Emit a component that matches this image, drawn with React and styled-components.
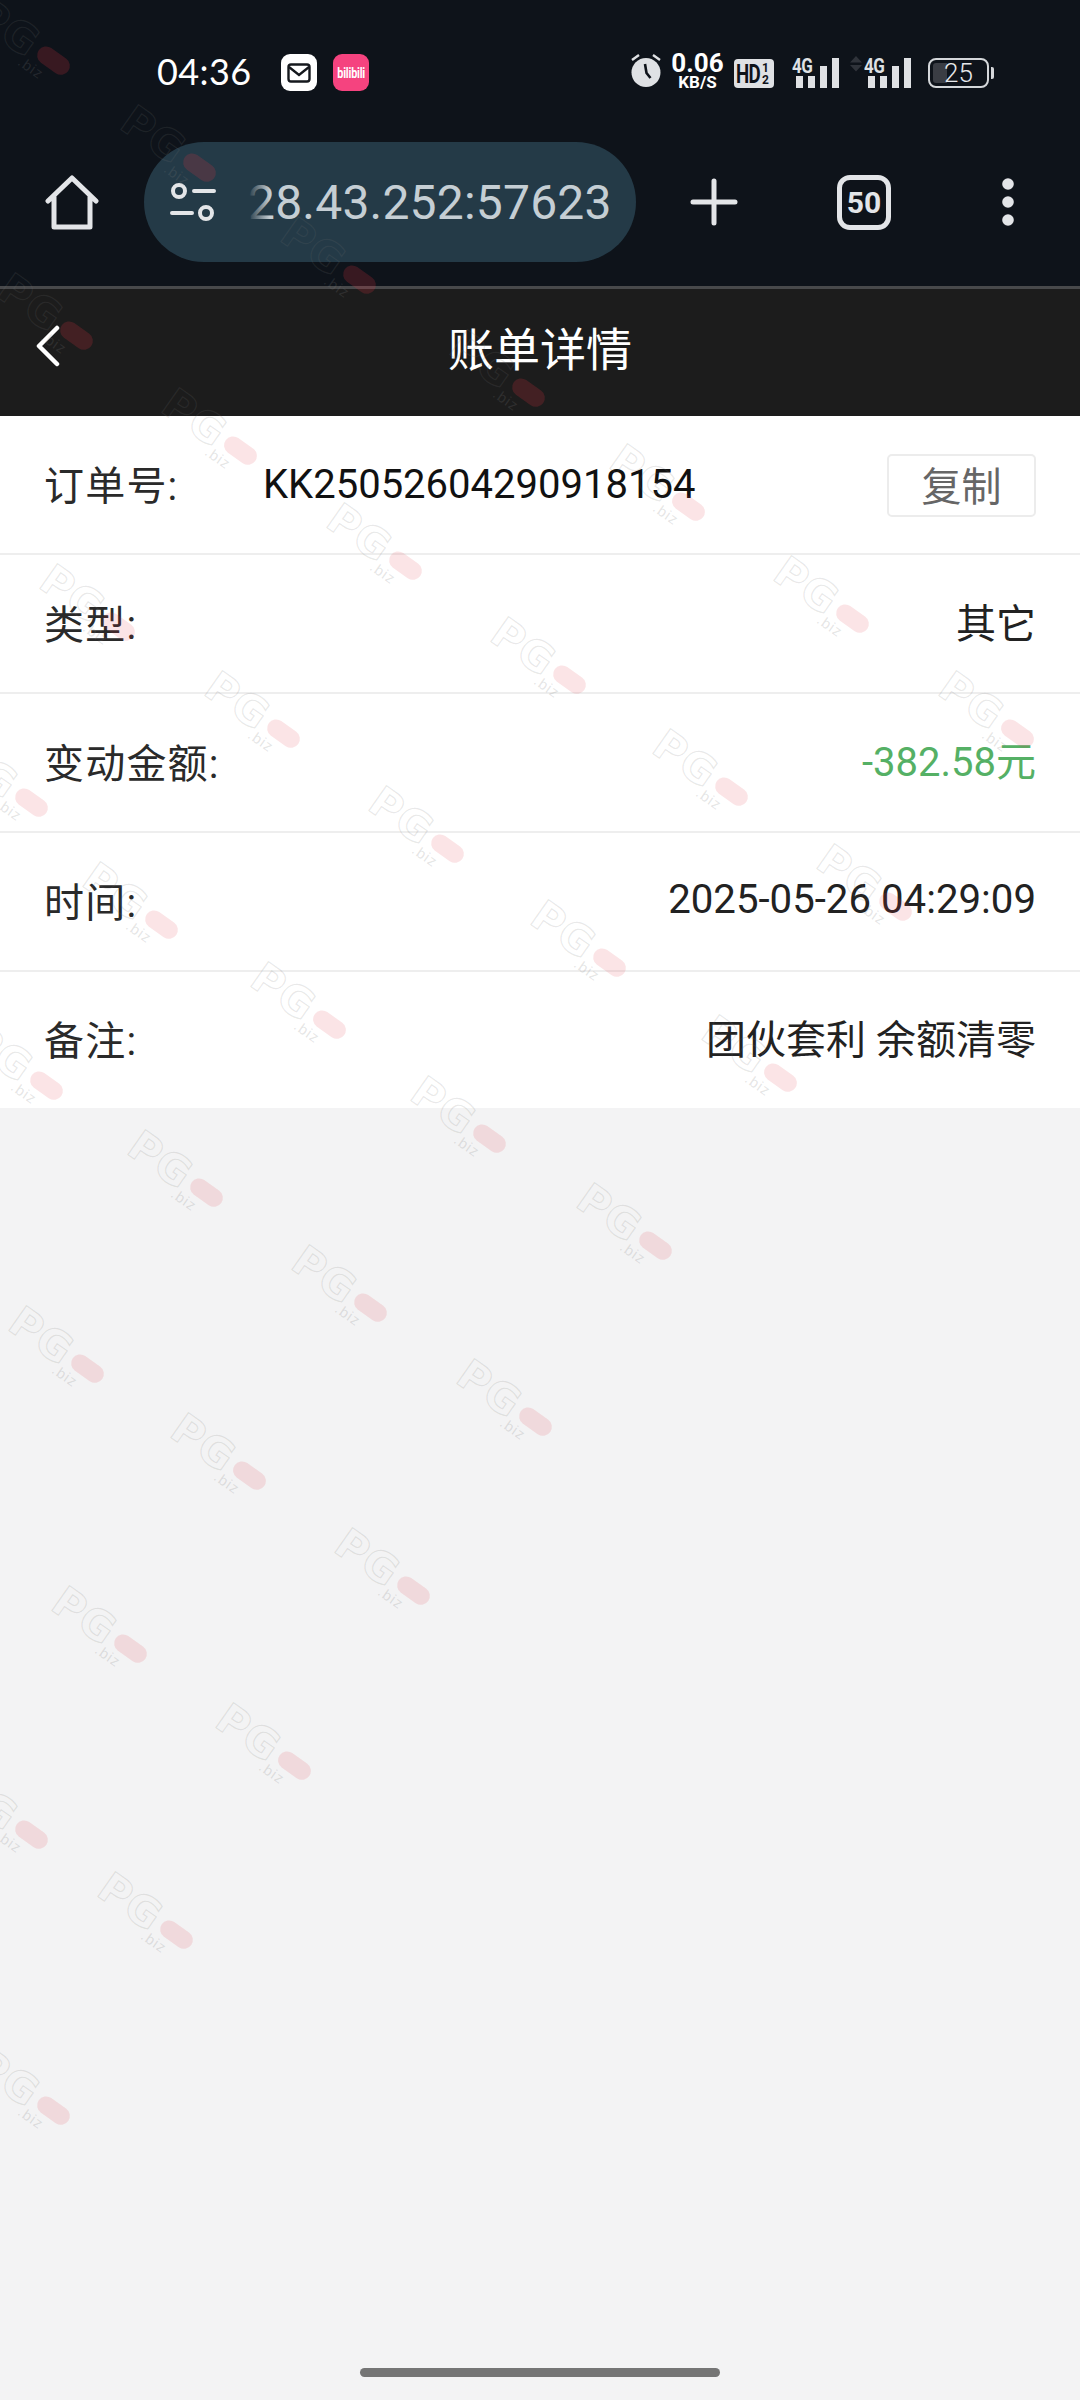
import React from 'react'
import styled, { createGlobalStyle } from 'styled-components'

const CJK = `Roboto, "Noto Sans CJK SC", sans-serif`

const GlobalStyle = createGlobalStyle`
  html, body {
    margin: 0;
    padding: 0;
    background: #f3f3f4;
    font-family: ${CJK};
  }
`

const Page = styled.div`
  position: relative;
  width: 1080px;
  height: 2400px;
  overflow: hidden;
  display: flex;
  flex-direction: column;
  background: #f3f3f4;
`

// status bar
const StatusBar = styled.div`
  height: 142px;
  box-sizing: border-box;
  padding: 50px 91px 0 157px;
  display: flex;
  align-items: flex-start;
  background: #0e131a;
  color: #fff;
`
const Time = styled.div`
  font-size: 36px;
  line-height: 42px;
  width: 124px;
  letter-spacing: 0.4px;
  font-family: Lato, Roboto, sans-serif;
`
const AppBadge = styled.div`
  width: 36px;
  height: 37px;
  margin: 4px 16px 0 0;
  border-radius: 9px;
  background: ${({ $bg }) => $bg};
  display: flex;
  align-items: center;
  justify-content: center;
  overflow: hidden;
`
const BiliText = styled.span`
  color: #fff;
  font-size: 15px;
  font-weight: 700;
  letter-spacing: -0.3px;
  transform: scaleX(0.72);
`
const StatusRight = styled.div`
  margin-left: auto;
  display: flex;
  align-items: flex-end;
  height: 38px;
  color: #dfe1e4;
`
const Speed = styled.div`
  width: 51px;
  margin: 0 11px -2px 10px;
  display: flex;
  flex-direction: column;
  align-items: center;
  color: #fff;
  font-weight: 700;
  font-size: 26px;
  line-height: 22px;
  small {
    font-size: 17px;
    line-height: 16px;
    font-weight: 700;
  }
`
const HdBadge = styled.div`
  width: 40px;
  height: 29px;
  margin: 0 22px 0 0;
  background: #dfe1e4;
  border-radius: 4px;
  color: #0e131a;
  display: flex;
  align-items: center;
  justify-content: center;
  font-weight: 700;
`
const HdText = styled.span`
  font-size: 26px;
  letter-spacing: -1px;
  transform: scaleX(0.72);
  width: 26px;
  margin-left: -3px;
  transform-origin: left;
`
const HdFraction = styled.span`
  display: flex;
  flex-direction: column;
  align-items: center;
  font-size: 12px;
  line-height: 12px;
`
const Signal = styled.div`
  position: relative;
  display: flex;
  align-items: flex-end;
  gap: 5px;
  margin-right: ${({ $gap }) => $gap}px;
`
const SignalLabel = styled.span`
  position: absolute;
  left: -4px;
  top: -2px;
  font-size: 20px;
  line-height: 20px;
  font-weight: 700;
  letter-spacing: -0.5px;
  transform: scaleX(0.85);
  transform-origin: left;
`
const Arrows = styled.svg`
  position: absolute;
  left: -18px;
  top: -2px;
`
const Bar = styled.i`
  display: block;
  width: 7px;
  height: ${({ $h }) => $h}px;
  background: #dfe1e4;
`
const Battery = styled.div`
  position: relative;
  width: 61px;
  height: 30px;
  box-sizing: border-box;
  border: 2px solid #d4d7da;
  border-radius: 8px;
  display: flex;
  align-items: center;
  justify-content: center;
  font-size: 26px;
  font-weight: 300;
  color: #e6e8ea;
  &::before {
    content: '';
    position: absolute;
    left: 3px;
    top: 3px;
    bottom: 3px;
    width: 14px;
    background: #3a3d44;
    border-radius: 3px 0 0 3px;
  }
  &::after {
    content: '';
    position: absolute;
    right: -7px;
    top: 7px;
    bottom: 7px;
    width: 3px;
    background: #d4d7da;
    border-radius: 0 2px 2px 0;
  }
`
const BatteryValue = styled.span`
  position: relative;
`

// browser toolbar
const Toolbar = styled.div`
  height: 147px;
  box-sizing: border-box;
  display: flex;
  align-items: flex-start;
  background: #0e131a;
  border-bottom: 3px solid #48494b;
`
const HomeSlot = styled.div`
  width: 144px;
  height: 120px;
  display: flex;
  align-items: center;
  justify-content: center;
`
const AddressPill = styled.div`
  width: 492px;
  height: 120px;
  box-sizing: border-box;
  padding-left: 26px;
  border-radius: 60px;
  background: #243a47;
  display: flex;
  align-items: center;
  overflow: hidden;
`
const AddressText = styled.div`
  position: relative;
  margin-left: 32px;
  font-size: 48px;
  letter-spacing: 0.2px;
  color: #c5ced4;
  white-space: nowrap;
  &::before {
    content: '';
    position: absolute;
    left: 0;
    top: 0;
    bottom: 0;
    width: 22px;
    background: linear-gradient(to right, #243a47, rgba(36, 58, 71, 0));
  }
`
const ToolSlot = styled.div`
  width: ${({ $w }) => $w}px;
  height: 120px;
  display: flex;
  align-items: center;
  justify-content: center;
`
const TabCount = styled.div`
  width: 54px;
  height: 55px;
  box-sizing: border-box;
  border: 5px solid #e3e5e8;
  border-radius: 13px;
  display: flex;
  align-items: center;
  justify-content: center;
  color: #e3e5e8;
  font-size: 30px;
  font-weight: 700;
`

// page header
const Header = styled.header`
  position: relative;
  height: 127px;
  box-sizing: border-box;
  padding-bottom: 14px;
  display: flex;
  align-items: center;
  justify-content: center;
  background: #1c1c1c;
  color: #fff;
  font-size: 46px;
`
const BackIcon = styled.svg`
  position: absolute;
  left: 35px;
  top: 36px;
`

// detail rows
const List = styled.div`
  background: #fff;
`
const Row = styled.div`
  height: ${({ $last }) => ($last ? 136 : 139)}px;
  box-sizing: border-box;
  padding: 0 44px;
  display: flex;
  align-items: center;
  border-bottom: ${({ $last }) => ($last ? 'none' : '2px solid #eeeeee')};
`
const Label = styled.div`
  width: 219px;
  padding-bottom: 4px;
  font-size: 40px;
  letter-spacing: 1.2px;
  color: #2a2a2a;
  flex-shrink: 0;
`
const Value = styled.div`
  margin-left: ${({ $left }) => ($left ? 0 : 'auto')};
  padding-bottom: ${({ $lift }) => $lift}px;
  font-size: ${({ $size }) => $size || 40}px;
  color: ${({ $color }) => $color || '#222'};
  white-space: nowrap;
`
const CopyButton = styled.div`
  margin: 2px 0 0 auto;
  width: 149px;
  height: 63px;
  box-sizing: border-box;
  padding-bottom: 3px;
  border: 2px solid #ececec;
  border-radius: 5px;
  display: flex;
  align-items: center;
  justify-content: center;
  font-size: 40px;
  color: #666;
`
const HomeIndicator = styled.div`
  position: absolute;
  left: 360px;
  bottom: 23px;
  width: 360px;
  height: 9px;
  border-radius: 5px;
  background: #757575;
`

// watermark laid over the whole screen
const Mark = styled.div`
  position: absolute;
  left: ${({ $x }) => $x}px;
  top: ${({ $y }) => $y}px;
  width: 108px;
  height: 44px;
  transform: translate(-50%, -50%) rotate(35deg);
  pointer-events: none;
`
const MarkLetters = styled.span`
  position: absolute;
  left: 0;
  top: 0;
  font: 700 42px/44px 'DejaVu Sans', sans-serif;
  letter-spacing: 1px;
  color: transparent;
  -webkit-text-stroke: 1.2px rgba(115, 115, 115, 0.17);
`
const MarkPill = styled.span`
  position: absolute;
  left: 72px;
  top: 13px;
  width: 36px;
  height: 18px;
  border-radius: 9px;
  background: rgba(225, 50, 65, ${({ $dark }) => ($dark ? 0.2 : 0.13)});
`
const MarkTail = styled.span`
  position: absolute;
  left: 62px;
  top: 33px;
  font: 15px/16px 'Liberation Sans', sans-serif;
  letter-spacing: 1px;
  color: rgba(125, 125, 125, 0.2);
`

const SCALE = 1080 / 706
const HEADER_BOTTOM = 416
const MARKS = [
  [16, 26], [111, 96], [216, 169], [326, 243], [31, 206], [138, 281], [246, 356], [431, 318],
  [353, 431], [459, 504], [566, 579], [58, 396], [166, 466], [273, 541], [379, 616], [491, 691],
  [538, 391], [646, 466], [1, 511], [86, 591], [196, 656], [301, 731], [409, 801], [11, 696],
  [116, 766], [223, 841], [331, 916], [38, 881], [144, 951], [251, 1026], [66, 1064], [173, 1141],
  [1, 1186], [96, 1251], [16, 1366],
]

const ROWS = [
  { label: '类型:', value: '其它', lift: 5 },
  { label: '变动金额:', value: '-382.58元', color: '#55b065', lift: 7 },
  { label: '时间:', value: '2025-05-26 04:29:09', size: 40.2, lift: 4 },
  { label: '备注:', value: '团伙套利 余额清零', lift: 6, last: true },
]

const stroke = { fill: 'none', stroke: '#e3e5e8', strokeLinecap: 'round', strokeLinejoin: 'round' }

const SignalBars = ({ gap, arrows }) => (
  <Signal $gap={gap}>
    {arrows && (
      <Arrows width="12" height="16" viewBox="0 0 12 16" fill="#2f333a">
        <path d="M6 0l6 6.5H0zM0 9h12l-6 6.5z" />
      </Arrows>
    )}
    <SignalLabel>4G</SignalLabel>
    <Bar $h={12} />
    <Bar $h={12} />
    <Bar $h={22} />
    <Bar $h={30} />
  </Signal>
)

export default function App() {
  return (
    <Page>
      <GlobalStyle />
      <StatusBar>
        <Time>04:36</Time>
        <AppBadge $bg="#fff">
          <svg width="24" height="20" viewBox="0 0 24 20">
            <rect x="1.5" y="1.5" width="21" height="17" rx="2.5" fill="none" stroke="#15181d" strokeWidth="2.4" />
            <path d="M2 4l10 8 10-8" fill="none" stroke="#15181d" strokeWidth="2.4" />
          </svg>
        </AppBadge>
        <AppBadge $bg="#f5437f">
          <BiliText>bilibili</BiliText>
        </AppBadge>
        <StatusRight>
          <svg width="32" height="36" viewBox="0 0 32 36">
            <circle cx="16" cy="20.5" r="14.5" fill="#dfe1e4" />
            <path d="M15 12l1.5 9 4 5" fill="none" stroke="#0e131a" strokeWidth="2.6" />
            <path d="M2 8l7-5M30 8l-7-5" fill="none" stroke="#dfe1e4" strokeWidth="2.4" />
          </svg>
          <Speed>
            0.06
            <small>KB/S</small>
          </Speed>
          <HdBadge>
            <HdText>HD</HdText>
            <HdFraction>
              <span>1</span>
              <span>2</span>
            </HdFraction>
          </HdBadge>
          <SignalBars gap={29} />
          <SignalBars gap={17} arrows />
          <Battery>
            <BatteryValue>25</BatteryValue>
          </Battery>
        </StatusRight>
      </StatusBar>

      <Toolbar>
        <HomeSlot>
          <svg width="54" height="56" viewBox="0 0 54 56" {...stroke} strokeWidth="5">
            <path d="M3 27L27 4l24 23M9 23v30h36V23" />
          </svg>
        </HomeSlot>
        <AddressPill>
          <svg width="46" height="40" viewBox="0 0 46 40" {...stroke} strokeWidth="4">
            <circle cx="9" cy="9" r="6" />
            <circle cx="36" cy="31" r="6" />
            <path d="M24 9h20M2 31h20" />
          </svg>
          <AddressText>28.43.252:57623</AddressText>
        </AddressPill>
        <ToolSlot $w={156}>
          <svg width="48" height="48" viewBox="0 0 48 48" {...stroke} strokeWidth="5">
            <path d="M24 3v42M3 24h42" />
          </svg>
        </ToolSlot>
        <ToolSlot $w={144}>
          <TabCount>50</TabCount>
        </ToolSlot>
        <ToolSlot $w={144}>
          <svg width="12" height="48" viewBox="0 0 12 48" fill="#e3e5e8">
            <circle cx="6" cy="6" r="5.8" />
            <circle cx="6" cy="24" r="5.8" />
            <circle cx="6" cy="42" r="5.8" />
          </svg>
        </ToolSlot>
      </Toolbar>

      <Header>
        <BackIcon width="26" height="42" viewBox="0 0 26 42" fill="none" stroke="#fff" strokeWidth="4.5" strokeLinecap="round" strokeLinejoin="round">
          <path d="M22 3L4 21l18 18" />
        </BackIcon>
        账单详情
      </Header>

      <List>
        <Row>
          <Label>订单号:</Label>
          <Value $left $lift={0} $color="#111">KK25052604290918154</Value>
          <CopyButton>复制</CopyButton>
        </Row>
        {ROWS.map((row) => (
          <Row key={row.label} $last={row.last}>
            <Label>{row.label}</Label>
            <Value $color={row.color} $size={row.size} $lift={row.lift}>{row.value}</Value>
          </Row>
        ))}
      </List>

      <HomeIndicator />

      {MARKS.map(([x, y]) => (
        <Mark key={`${x}-${y}`} $x={Math.round(x * SCALE)} $y={Math.round(y * SCALE)}>
          <MarkLetters>PG</MarkLetters>
          <MarkPill $dark={y * SCALE < HEADER_BOTTOM} />
          <MarkTail>.biz</MarkTail>
        </Mark>
      ))}
    </Page>
  )
}
